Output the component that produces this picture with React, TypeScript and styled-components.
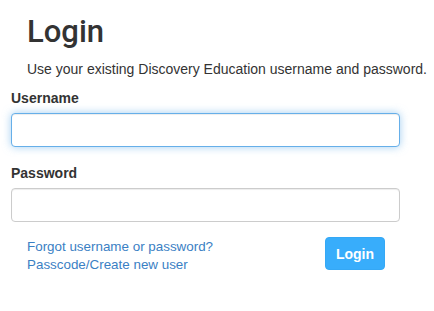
import * as React from 'react';
import styled, { createGlobalStyle } from 'styled-components';

const GlobalStyle = createGlobalStyle`
  html, body {
    margin: 0;
    padding: 0;
    background: #ffffff;
  }
  body {
    font-family: "Liberation Sans", Arial, sans-serif;
    font-size: 14px;
    line-height: 20px;
    color: #333333;
  }
`;

const Page = styled.div`
  width: 389px;
  padding: 14px 0 0 11px;
`;

const Intro = styled.div`
  padding-left: 16px;
`;

const Title = styled.h1`
  margin: 0;
  font-family: Roboto, "Liberation Sans", Arial, sans-serif;
  font-size: 31px;
  line-height: 35px;
  font-weight: 500;
  color: #333333;
`;

const Lead = styled.p`
  margin: 10px 0 0;
  font-size: 14px;
  line-height: 20px;
  white-space: nowrap;
`;

const Form = styled.form`
  display: flex;
  flex-direction: column;
  margin-top: 9px;
`;

const Group = styled.div`
  display: flex;
  flex-direction: column;
  margin-bottom: 16px;
`;

const Label = styled.label`
  font-size: 14px;
  line-height: 20px;
  font-weight: 700;
  margin-bottom: 5px;
`;

const Input = styled.input<{ $focused?: boolean }>`
  box-sizing: border-box;
  width: 100%;
  height: 34px;
  padding: 6px 12px;
  font-family: inherit;
  font-size: 14px;
  color: #555555;
  background: #ffffff;
  border: 1px solid ${(p) => (p.$focused ? '#66afe9' : '#cccccc')};
  border-radius: 4px;
  outline: none;
  box-shadow: ${(p) =>
    p.$focused
      ? 'inset 0 1px 1px rgba(0,0,0,.075), 0 0 8px rgba(102,175,233,.6)'
      : 'inset 0 1px 1px rgba(0,0,0,.075)'};
`;

const Footer = styled.div`
  display: flex;
  justify-content: space-between;
  align-items: flex-start;
  padding: 0 15px 0 16px;
  margin-top: -1px;
`;

const Links = styled.div`
  display: flex;
  flex-direction: column;
  padding-top: 1px;
`;

const Link = styled.a`
  font-size: 13.4px;
  line-height: 18px;
  color: #3a80c4;
  text-decoration: none;
`;

const Button = styled.button`
  box-sizing: border-box;
  height: 33px;
  padding: 0 10px;
  font-family: inherit;
  font-size: 14px;
  font-weight: 700;
  color: #ffffff;
  background: #38adfb;
  border: 1px solid #35a8f5;
  border-radius: 4px;
  cursor: pointer;
`;

export default function App() {
  return (
    <Page>
      <GlobalStyle />
      <Intro>
        <Title>Login</Title>
        <Lead>Use your existing Discovery Education username and password.</Lead>
      </Intro>
      <Form onSubmit={(e) => e.preventDefault()}>
        <Group>
          <Label htmlFor="username">Username</Label>
          <Input id="username" type="text" $focused />
        </Group>
        <Group>
          <Label htmlFor="password">Password</Label>
          <Input id="password" type="password" />
        </Group>
        <Footer>
          <Links>
            <Link href="#">Forgot username or password?</Link>
            <Link href="#">Passcode/Create new user</Link>
          </Links>
          <Button type="submit">Login</Button>
        </Footer>
      </Form>
    </Page>
  );
}
